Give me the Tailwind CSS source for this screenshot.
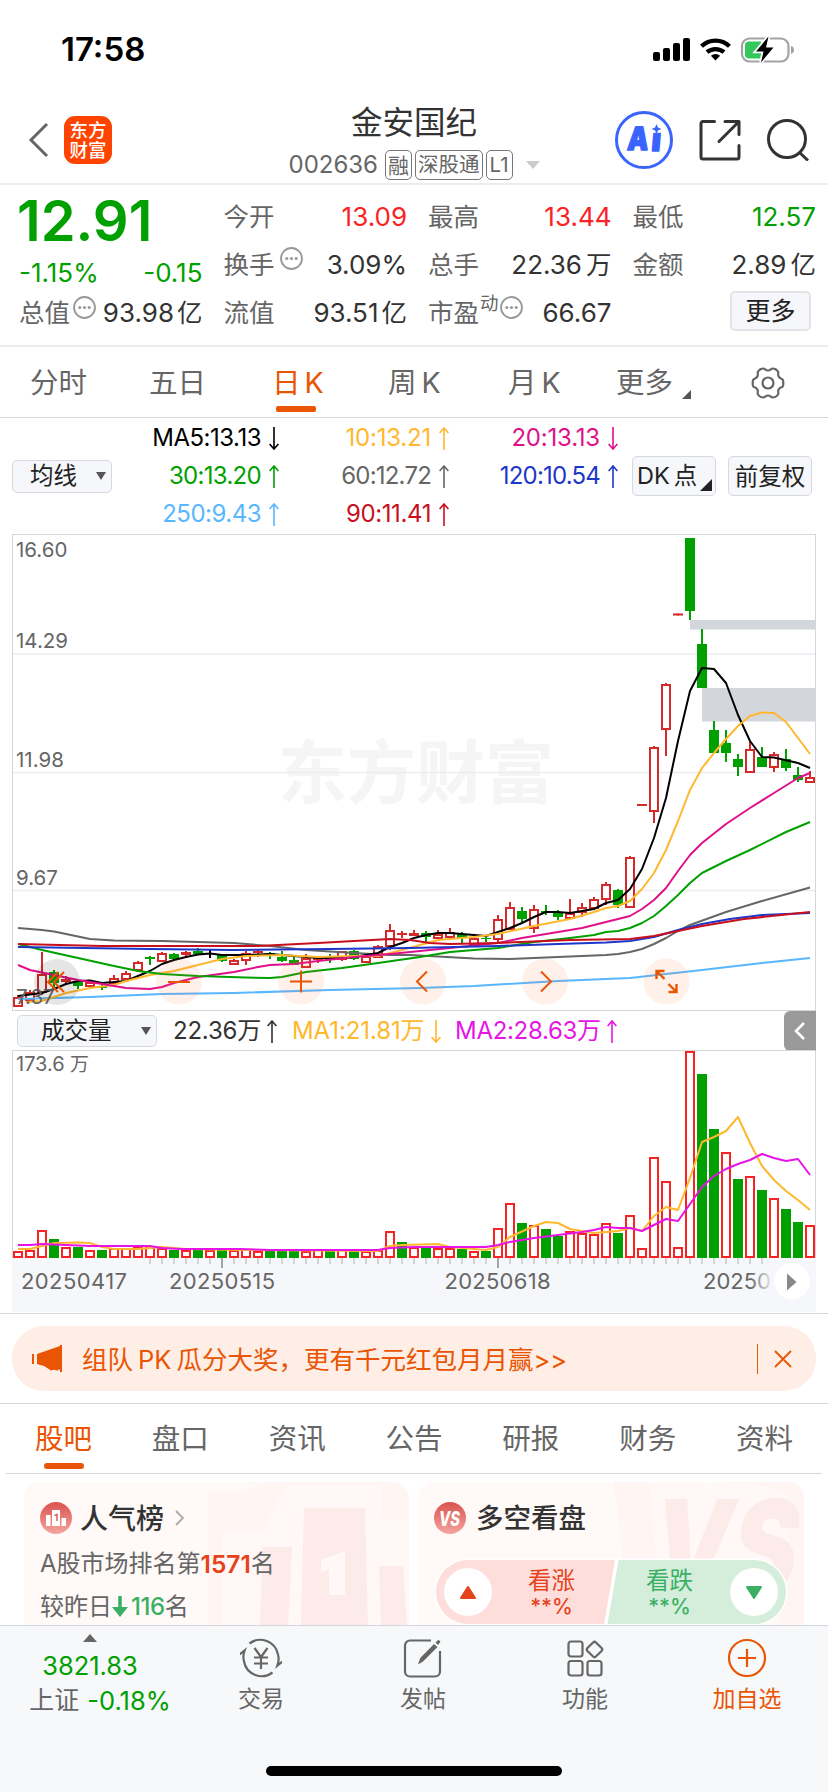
<!DOCTYPE html>
<html lang="zh-CN">
<head>
  <meta charset="UTF-8" />
  <meta name="viewport" content="width=device-width, initial-scale=1.0" />
  <title>金安国纪 002636</title>
  <script src="https://cdn.jsdelivr.net/npm/@tailwindcss/browser@4"></script>
</head>
<body class="w-[828px] h-[1792px] overflow-hidden bg-white text-[#333] font-[Inter,'Noto_Sans_CJK_SC',sans-serif]">
  <div class="flex flex-col h-full">

    <!-- Status bar -->
    <div class="h-[90px] shrink-0 flex items-center justify-between pl-[61px] pr-[34px] pt-[9px]">
      <span class="text-[33px] font-semibold text-black leading-none">17:58</span>
      <svg class="w-[142px] h-[30px]" viewBox="652 35 142 30">
        <g fill="#000">
          <rect x="653" y="52" width="7" height="9" rx="2" />
          <rect x="663" y="48" width="7" height="13" rx="2" />
          <rect x="673" y="43" width="7" height="18" rx="2" />
          <rect x="683" y="38" width="7" height="23" rx="2" />
          <path d="M715.500 60.500l-4.600-4.800a7 7 0 0 1 9.200 0z" />
        </g>
        <g fill="none" stroke="#000" stroke-width="4.200">
          <path d="M701.500 46.300a20 20 0 0 1 28 0" />
          <path d="M707 52.200a13 13 0 0 1 17 0" />
        </g>
        <rect x="742" y="38.500" width="46.500" height="23" rx="7.500" fill="none" stroke="#a3a3a3" stroke-width="2.200" />
        <path d="M791 46v8c2-.6 3-2.200 3-4s-1-3.400-3-4z" fill="#a3a3a3" />
        <path d="M749 41.500h12v17h-12a4 4 0 0 1-4-4v-9a4 4 0 0 1 4-4z" fill="#34c759" />
        <path d="M768.500 36.500L756 51.500h7.500l-2.500 11 12.500-15H766z" fill="#000" stroke="#fff" stroke-width="3.500" paint-order="stroke" />
      </svg>
    </div>

    <!-- Title bar -->
    <header class="h-[95px] shrink-0 flex items-center border-b-2 border-[#ececec] relative pl-[28px] pr-[19px] pt-[6px]">
      <svg class="w-[22px] h-[36px]" viewBox="0 0 22 36"><path d="M19 2L3 18l16 16" fill="none" stroke="#666" stroke-width="3" /></svg>
      <div class="ml-[14px] size-[48px] rounded-[11px] bg-[#ff4400] text-white text-[18.500px] font-medium leading-[20px] flex flex-col items-center justify-center">
        <span>东方</span><span>财富</span>
      </div>
      <div class="absolute left-0 right-0 top-0 h-full flex flex-col items-center pointer-events-none">
        <h1 class="text-[31.500px] leading-[40px] mt-[13px]">金安国纪</h1>
        <div class="flex items-center gap-[3px] mt-[7px] text-[#666] text-[21px] leading-none">
          <span class="text-[24px] mr-[4px]">002636</span>
          <span class="border-[1.500px] border-[#777] rounded-[5px] h-[30px] px-[2px] flex items-center">融</span>
          <span class="border-[1.500px] border-[#777] rounded-[5px] h-[30px] px-[2px] flex items-center text-[20.500px]">深股通</span>
          <span class="border-[1.500px] border-[#777] rounded-[5px] h-[30px] px-[3px] flex items-center text-[20.500px]">L1</span>
          <svg class="w-[14px] h-[8px] ml-[10px]" viewBox="0 0 14 8"><path d="M0 0h14L7 8z" fill="#ccc" /></svg>
        </div>
      </div>
      <div class="ml-auto flex items-center gap-[26px]">
        <svg class="size-[58px]" viewBox="0 0 58 58">
          <circle cx="29" cy="29" r="27.500" fill="none" stroke="#3964fe" stroke-width="3" />
          <g transform="translate(3.200 0) skewX(-5)" fill="#3964fe" stroke="#3964fe" stroke-width="1.500" stroke-linejoin="round" font-family="Inter, sans-serif" font-weight="900" font-size="32"><text x="12" y="39.500" textLength="21" lengthAdjust="spacingAndGlyphs">A</text><text x="36" y="40.500">ı</text></g>
          <path d="M41.500 13l1.400 3.600 3.600 1.400-3.600 1.400-1.400 3.600-1.400-3.600-3.600-1.400 3.600-1.400z" fill="#3964fe" />
        </svg>
        <svg class="w-[42px] h-[42px]" viewBox="0 0 42 42" fill="none" stroke="#333" stroke-width="3" stroke-linecap="round" stroke-linejoin="round">
          <path d="M15.500 2.500H4a2 2 0 0 0-2 2V38a2 2 0 0 0 2 2h34a2 2 0 0 0 2-2V26.500M26 2.500h14V15.500M39 3.500L20 22.500" />
        </svg>
        <svg class="w-[42px] h-[42px]" viewBox="0 0 42 42" fill="none" stroke="#333" stroke-width="3"><circle cx="20" cy="20" r="18.500" /><path d="M32 33l9 8.500" /></svg>
      </div>
    </header>

    <!-- Quote summary -->
    <section class="h-[162px] shrink-0 border-b-2 border-[#ececec] grid grid-cols-4 gap-x-[21px] pl-[19px] pr-[12px] text-[25.500px] leading-none">
      <div class="flex flex-col text-[#00a000]">
        <span class="text-[56px] font-semibold mt-[9px] leading-[54px] -ml-[2px]">12.91</span>
        <div class="flex justify-between items-center mt-[12px] h-[26px]"><span class="text-[26px]">-1.15%</span><span class="text-[26px]">-0.15</span></div>
        <div class="flex justify-between items-center mt-[13px] h-[28px] text-[#333]">
          <span class="text-[#666] flex">总值<svg class="size-[23px] ml-[3px] -mt-[4px]" viewBox="0 0 22 22"><circle cx="11" cy="11" r="10" fill="none" stroke="#999" stroke-width="1.800" /><g fill="#999"><circle cx="6.500" cy="11" r="1.500" /><circle cx="11" cy="11" r="1.500" /><circle cx="15.500" cy="11" r="1.500" /></g></svg></span>
          <span class="flex gap-[3px]"><span class="text-[26px]">93.98</span>亿</span>
        </div>
      </div>
      <div class="flex flex-col pt-[18px] gap-[20px]">
        <div class="flex justify-between items-center h-[28px]"><span class="text-[#666]">今开</span><span class="text-[26px] text-[#fa2323]">13.09</span></div>
        <div class="flex justify-between items-center h-[28px]">
          <span class="text-[#666] flex">换手<svg class="size-[23px] ml-[5px] -mt-[5px]" viewBox="0 0 22 22"><circle cx="11" cy="11" r="10" fill="none" stroke="#999" stroke-width="1.800" /><g fill="#999"><circle cx="6.500" cy="11" r="1.500" /><circle cx="11" cy="11" r="1.500" /><circle cx="15.500" cy="11" r="1.500" /></g></svg></span>
          <span class="text-[26px]">3.09%</span>
        </div>
        <div class="flex justify-between items-center h-[28px]"><span class="text-[#666]">流值</span><span class="flex gap-[3px]"><span class="text-[26px]">93.51</span>亿</span></div>
      </div>
      <div class="flex flex-col pt-[18px] gap-[20px]">
        <div class="flex justify-between items-center h-[28px]"><span class="text-[#666]">最高</span><span class="text-[26px] text-[#fa2323]">13.44</span></div>
        <div class="flex justify-between items-center h-[28px]"><span class="text-[#666]">总手</span><span class="flex gap-[4px]"><span class="text-[26px]">22.36</span>万</span></div>
        <div class="flex justify-between items-center h-[28px]">
          <span class="text-[#666] flex">市盈<span class="text-[18.500px] -mt-[6px] ml-[1px]">动</span><svg class="size-[23px] ml-[1px] -mt-[4px]" viewBox="0 0 22 22"><circle cx="11" cy="11" r="10" fill="none" stroke="#999" stroke-width="1.800" /><g fill="#999"><circle cx="6.500" cy="11" r="1.500" /><circle cx="11" cy="11" r="1.500" /><circle cx="15.500" cy="11" r="1.500" /></g></svg></span>
          <span class="text-[26px]">66.67</span>
        </div>
      </div>
      <div class="flex flex-col pt-[18px] gap-[20px]">
        <div class="flex justify-between items-center h-[28px]"><span class="text-[#666]">最低</span><span class="text-[26px] text-[#00a000]">12.57</span></div>
        <div class="flex justify-between items-center h-[28px]"><span class="text-[#666]">金额</span><span class="flex gap-[4px]"><span class="text-[26px]">2.89</span>亿</span></div>
        <button class="self-end w-[81px] h-[40px] -mt-[8px] mr-[5px] rounded-[5px] border-2 border-[#e2e4e8] bg-[#f6f7fa] text-[#222] text-[25px] pt-[1px]">更多</button>
      </div>
    </section>

    <!-- Period tabs -->
    <nav class="h-[71px] shrink-0 border-b border-[#d3d6db] flex items-center text-[28.500px] leading-none text-[#666] pl-[30px] pt-[2px]">
      <span class="w-[119px]">分时</span>
      <span class="w-[123px]">五日</span>
      <span class="w-[116px] text-[#ea5504] relative">日<span class="ml-[4px]">K</span><i class="absolute left-[4px] top-[37px] w-[40px] h-[6px] rounded-[2px] bg-[#ea5504]"></i></span>
      <span class="w-[120px]">周<span class="ml-[5px]">K</span></span>
      <span class="w-[108px]">月<span class="ml-[5px]">K</span></span>
      <span class="flex items-end">更多<svg class="size-[9px] ml-[9px] -mb-[2px]" viewBox="0 0 9 9"><path d="M9 0v9H0z" fill="#555" /></svg></span>
      <svg class="size-[34px] ml-[60px] -mt-[1px]" viewBox="0 0 34 34" fill="none" stroke="#666" stroke-width="2.200" stroke-linejoin="round">
        <path d="M12.500 2.500c1.500 0 2 2 4.500 2s3-2 4.500-2c1.800 0 4.500 1.500 5.500 3 1 1.600-.6 2.700.6 5s4 2 4.400 3.500c.4 2 .4 4 0 6-.4 1.500-3.200 1.200-4.400 3.500s.4 3.400-.6 5c-1 1.500-3.700 3-5.500 3-1.500 0-2-2-4.500-2s-3 2-4.500 2c-1.800 0-4.500-1.500-5.500-3-1-1.600.6-2.700-.6-5S2.400 21.500 2 20c-.4-2-.4-4 0-6 .4-1.500 3.200-1.200 4.400-3.500S6 7.100 7 5.500c1-1.500 3.700-3 5.500-3z" />
        <circle cx="17" cy="17" r="5.500" />
      </svg>
    </nav>

    <!-- Moving averages -->
    <section class="h-[116px] shrink-0 flex items-center pl-[12px] text-[24px] leading-none">
      <button class="w-[100px] h-[33px] rounded-[5px] border-[1.500px] border-[#d6d9de] bg-[#f6f7fa] text-[#222] text-[23.500px] flex items-center pl-[17px]">均线<svg class="w-[10px] h-[8px] ml-auto mr-[5px]" viewBox="0 0 10 8"><path d="M0 0h10L5 8z" fill="#555" /></svg></button>
      <div class="grid grid-cols-[167px_170px_169px] w-[506px] gap-y-[13px] justify-items-end tracking-[-0.2px]">
        <span class="flex items-center gap-[8px] h-[25px] text-black tracking-[-0.5px]">MA5:13.13<svg class="w-[10px] h-[23px]" viewBox="0 0 10 23" fill="none" stroke="currentColor" stroke-width="1.600"><path d="M5 0v22M.6 17L5 22l4.400-5" /></svg></span>
        <span class="flex items-center gap-[8px] h-[25px] text-[#ffb82e]">10:13.21<svg class="w-[10px] h-[23px]" viewBox="0 0 10 23" fill="none" stroke="currentColor" stroke-width="1.600"><path d="M5 23V1M.6 6L5 1l4.400 5" /></svg></span>
        <span class="flex items-center gap-[8px] h-[25px] text-[#e0108a]">20:13.13<svg class="w-[10px] h-[23px]" viewBox="0 0 10 23" fill="none" stroke="currentColor" stroke-width="1.600"><path d="M5 0v22M.6 17L5 22l4.400-5" /></svg></span>
        <span class="flex items-center gap-[8px] h-[25px] text-[#00a000] tracking-[-0.7px]">30:13.20<svg class="w-[10px] h-[23px]" viewBox="0 0 10 23" fill="none" stroke="currentColor" stroke-width="1.600"><path d="M5 23V1M.6 6L5 1l4.400 5" /></svg></span>
        <span class="flex items-center gap-[8px] h-[25px] text-[#666] tracking-[-0.8px]">60:12.72<svg class="w-[10px] h-[23px]" viewBox="0 0 10 23" fill="none" stroke="currentColor" stroke-width="1.600"><path d="M5 23V1M.6 6L5 1l4.400 5" /></svg></span>
        <span class="flex items-center gap-[8px] h-[25px] text-[#1e37c8] tracking-[-0.8px]">120:10.54<svg class="w-[10px] h-[23px]" viewBox="0 0 10 23" fill="none" stroke="currentColor" stroke-width="1.600"><path d="M5 23V1M.6 6L5 1l4.400 5" /></svg></span>
        <span class="flex items-center gap-[8px] h-[25px] text-[#58b7ff] tracking-[-0.5px]">250:9.43<svg class="w-[10px] h-[23px]" viewBox="0 0 10 23" fill="none" stroke="currentColor" stroke-width="1.600"><path d="M5 23V1M.6 6L5 1l4.400 5" /></svg></span>
        <span class="flex items-center gap-[8px] h-[25px] text-[#c80f1e] tracking-[-0.4px]">90:11.41<svg class="w-[10px] h-[23px]" viewBox="0 0 10 23" fill="none" stroke="currentColor" stroke-width="1.600"><path d="M5 23V1M.6 6L5 1l4.400 5" /></svg></span>
      </div>
      <button class="ml-[14px] w-[84px] h-[40px] rounded-[5px] border-[1.500px] border-[#d6d9de] bg-[#f6f7fa] text-[#222] text-[23.500px] flex items-center pl-[4px]">DK<span class="ml-[4px]">点</span><svg class="size-[12px] self-end mb-[4px] ml-[3px] shrink-0" viewBox="0 0 12 12"><path d="M12 0v12H0z" fill="#222" /></svg></button>
      <button class="ml-[12px] w-[84px] h-[40px] rounded-[5px] border-[1.500px] border-[#d6d9de] bg-[#f6f7fa] text-[#222] text-[23.500px] pt-[1px]">前复权</button>
    </section>

    <!-- Candlestick chart -->
    <svg id="kline" class="w-[828px] h-[478px] shrink-0" viewBox="0 534 828 478">
      <g font-family="'Noto Sans CJK SC', sans-serif" font-weight="700" fill="#f5f5f6"><text x="278" y="798" font-size="69">东方财富</text></g>
      <g fill="none" stroke="#ebedf4" stroke-width="1.500"><path d="M13 654h803M13 772.500h803M13 890.500h803" /></g>
      <rect x="12.500" y="534.500" width="803" height="476" fill="none" stroke="#d3d6db" />
      <g fill="#d3d6db"><rect x="690" y="620" width="126" height="9.500" /><rect x="702" y="688" width="114" height="33.500" /></g>
      <g id="candles"></g>
      <g id="averages" fill="none" stroke-width="2" stroke-linejoin="round"></g>
      <g font-family="Inter, sans-serif" font-size="20.500" fill="#666">
        <text x="16" y="557">16.60</text><text x="16" y="648">14.29</text><text x="16" y="766.500">11.98</text><text x="16" y="885">9.67</text><text x="16" y="1004">7.37</text>
      </g>
      <circle cx="57" cy="982" r="23" fill="#000" fill-opacity=".1" />
      <g fill="#ff7a3c" fill-opacity=".11"><circle cx="179" cy="981.500" r="23" /><circle cx="301" cy="981.500" r="23" /><circle cx="423" cy="981.500" r="23" /><circle cx="545" cy="981.500" r="23" /><circle cx="666.500" cy="981.500" r="23" /></g>
      <g fill="none" stroke="#ea5504" stroke-width="2">
        <path d="M58 972l-10 10 10 10M64 972l-10 10 10 10M168 982h22M290 981.500h22M301 970.500v22" />
        <path d="M427 971.500l-10 10 10 10M541 971.500l10 10-10 10" />
        <path d="M656.500 979v-8h8M656.500 971l8 8M668.500 992h8v-8M676.500 992l-8-8" stroke-width="2.400" />
      </g>
    </svg>

    <!-- Volume header -->
    <div class="h-[38px] shrink-0 flex items-center pl-[17px] pr-[12px] text-[24px] leading-none">
      <button class="w-[140px] h-[32px] rounded-[5px] border-[1.500px] border-[#d6d9de] bg-[#f6f7fa] text-[#222] flex items-center pl-[23px] text-[23.500px]">成交量<svg class="w-[10px] h-[8px] ml-auto mr-[5px]" viewBox="0 0 10 8"><path d="M0 0h10L5 8z" fill="#555" /></svg></button>
      <span class="flex items-center gap-[6px] ml-[16px] w-[119px] tracking-[-0.2px]">22.36万<svg class="w-[10px] h-[23px]" viewBox="0 0 10 23" fill="none" stroke="currentColor" stroke-width="1.600"><path d="M5 23V1M.6 6L5 1l4.400 5" /></svg></span>
      <span class="flex items-center gap-[6px] w-[163px] text-[#ffb82e] tracking-[-0.1px]">MA1:21.81万<svg class="w-[10px] h-[23px]" viewBox="0 0 10 23" fill="none" stroke="currentColor" stroke-width="1.600"><path d="M5 0v22M.6 17L5 22l4.400-5" /></svg></span>
      <span class="flex items-center gap-[6px] text-[#e614e6] tracking-[-0.3px]">MA2:28.63万<svg class="w-[10px] h-[23px]" viewBox="0 0 10 23" fill="none" stroke="currentColor" stroke-width="1.600"><path d="M5 23V1M.6 6L5 1l4.400 5" /></svg></span>
      <div class="ml-auto w-[32px] h-[40px] rounded-l-[6px] bg-[#999] flex items-center justify-center"><svg class="w-[12px] h-[20px]" viewBox="0 0 12 20"><path d="M10 2L2 10l8 8" fill="none" stroke="#fff" stroke-width="2.600" /></svg></div>
    </div>

    <!-- Volume chart with date axis -->
    <svg id="volume" class="w-[828px] h-[264px] shrink-0" viewBox="0 1050 828 264">
      <defs><linearGradient id="fade"><stop offset="0" stop-color="#f6f7fa" stop-opacity="0" /><stop offset="1" stop-color="#f6f7fa" /></linearGradient></defs>
      <rect x="12" y="1258" width="804" height="54" fill="#f6f7fa" />
      <path d="M12.500 1258V1050.500h803V1258" fill="none" stroke="#d3d6db" />
      <g id="bars"></g>
      <g id="volumeAverages" fill="none" stroke-width="2" stroke-linejoin="round"></g>
      <g id="ticks" stroke="#c8c8c8" stroke-width="1.500"></g>
      <g font-family="Inter, 'Noto Sans CJK SC', sans-serif" fill="#666">
        <text x="16" y="1071" font-size="20">173.6</text><text x="70" y="1071" font-size="19">万</text>
        <g font-size="22"><text x="21" y="1288.500" textLength="106">20250417</text><text x="169" y="1288.500" textLength="106">20250515</text><text x="444.500" y="1288.500" textLength="106">20250618</text><text x="703" y="1288.500">20250</text></g>
      </g>
      <rect x="750" y="1268" width="24" height="30" fill="url(#fade)" />
      <circle cx="792" cy="1281.500" r="18" fill="#fff" />
      <path d="M787 1273.500v17l9.500-8.500z" fill="#888" />
      <path d="M0 1313.500h828" stroke="#d3d6db" />
    </svg>

    <!-- Promo banner -->
    <div class="h-[90px] shrink-0 border-b border-[#d3d6db] px-[12px] pt-[12px]">
      <div class="h-[65px] rounded-[32px] bg-[#feeee6] text-[#ea5504] flex items-center pl-[20px] pr-[24px] text-[25.500px] leading-none">
        <svg class="w-[31px] h-[28px]" viewBox="0 0 31 28"><path d="M0 9h2v10H0zM5 9L28 1V0h2v27h-2v-2l-2-.8v1.600l-4-1-3 .8-7-4.600L5 19z" fill="#ea5504" /></svg>
        <span class="ml-[19px] mt-[2px]">组队<span class="mx-[5px]">PK</span>瓜分大奖，更有千元红包月月赢&gt;&gt;</span>
        <i class="ml-auto w-[1.500px] h-[30px] bg-[#ea5504]"></i>
        <svg class="size-[18px] ml-[16px]" viewBox="0 0 18 18"><path d="M1 1l16 16M17 1L1 17" stroke="#ea5504" stroke-width="1.800" /></svg>
      </div>
    </div>

    <!-- Content tabs -->
    <nav class="h-[70px] shrink-0 mx-[6px] border-b border-[#d3d6db] flex items-center justify-between px-[29px] pt-[2px] text-[28.500px] leading-none text-[#666]">
      <span class="text-[#ea5504] relative">股吧<i class="absolute left-[9px] top-[38px] w-[40px] h-[6px] rounded-[3px] bg-[#ea5504]"></i></span>
      <span>盘口</span><span>资讯</span><span>公告</span><span>研报</span><span>财务</span><span>资料</span>
    </nav>

    <!-- Cards, cut off by the bottom bar -->
    <div class="h-[151px] shrink-0 overflow-hidden flex gap-[9px] px-[24px] pt-[8px]">
      <div class="w-[385px] h-[180px] rounded-t-[16px] bg-[#fff9f7] relative overflow-hidden">
        <svg class="absolute inset-0 w-[385px] h-[143px]" viewBox="24 1482 385 143">
          <path d="M208 1491h36l22-9h143v143H208z" fill="#fff5f3" />
          <path d="M222 1531h40l24-46h96v34h27v106H222z" fill="#fff8f6" />
          <g fill="#fcebe9"><path d="M263 1547h29l-4 78h-28zM304 1508h61l3 117h-67zM379 1566h24l4 59h-26z" /></g>
          <path d="M321 1560l24-9v44h-16v-26l-8 3z" fill="#fff8f6" />
        </svg>
        <div class="relative pl-[16px] leading-none">
          <div class="flex items-center h-[32px] mt-[20px]">
            <svg class="size-[32px]" viewBox="0 0 32 32">
              <defs><linearGradient id="badge" x2="0" y2="1"><stop stop-color="#d9534f" /><stop offset="1" stop-color="#f5a5a0" /></linearGradient></defs>
              <circle cx="16" cy="16" r="16" fill="url(#badge)" />
              <path d="M6 13h4.500v11H6zM12 8h8v16h-8zM21.500 16H26v8h-4.500z" fill="#fff" /><path d="M14.500 13.500l2.500-1v6.500" fill="none" stroke="#dd6560" stroke-width="1.600" />
            </svg>
            <span class="text-[28px] font-medium ml-[8px] mt-[2px] text-[#333]">人气榜</span>
            <svg class="w-[9px] h-[16px] ml-[11px]" viewBox="0 0 9 16"><path d="M1 1l7 7-7 7" fill="none" stroke="#aaa" stroke-width="1.800" /></svg>
          </div>
          <p class="text-[24px] h-[28px] mt-[16px] text-[#666] flex items-center whitespace-nowrap">A股市场排名第<b class="font-semibold text-[#e4431b] text-[24.500px]">1571</b>名</p>
          <p class="text-[24px] h-[28px] mt-[15px] text-[#666] flex items-center whitespace-nowrap">较昨日<svg class="w-[16px] h-[22px]" viewBox="0 0 16 22"><path d="M6.200 0h3.600v11H16l-8 10-8-10h6.200z" fill="#3bb065" /></svg><b class="font-medium text-[#3bb065] ml-[3px] tracking-[-0.4px]">116</b>名</p>
        </div>
      </div>
      <div class="w-[386px] h-[180px] rounded-t-[16px] bg-[#fff9f7] relative overflow-hidden">
        <svg class="absolute inset-0 w-[386px] h-[143px]" viewBox="418 1482 386 143">
          <path d="M614 1482h80l14 10 16-10h80v143h-22l-40-60-118 0z" fill="#fff5f3" />
          <path d="M649 1482h46l13 10 16-10c40 0 60 8 70 20l-8 60H656z" fill="#fff8f6" />
          <g transform="translate(277 0) skewX(-10)" font-family="Inter, sans-serif" font-weight="900" fill="#fcebe9"><text x="650" y="1592" font-size="128" textLength="145" lengthAdjust="spacingAndGlyphs">VS</text></g>
        </svg>
        <div class="relative leading-none">
          <div class="flex items-center h-[32px] mt-[20px] pl-[16px]">
            <svg class="size-[32px]" viewBox="0 0 32 32"><circle cx="16" cy="16" r="16" fill="url(#badge)" /><text x="15.500" y="23.500" text-anchor="middle" font-family="Inter, sans-serif" font-style="italic" font-weight="800" font-size="20" textLength="21" lengthAdjust="spacingAndGlyphs" fill="#fff">VS</text></svg>
            <span class="text-[27.500px] font-medium ml-[10px] mt-[2px] text-[#333]">多空看盘</span>
          </div>
          <div class="relative ml-[18px] mt-[26px] w-[350px] h-[64px]">
            <svg class="absolute inset-0 w-[350px] h-[64px] overflow-visible" viewBox="0 0 350 64"><path d="M32 0h286a32 32 0 0 1 0 64H32a32 32 0 0 1 0-64z" fill="#fff" stroke="#fff" stroke-width="3" /><path d="M32 0h147l-11 64H32a32 32 0 0 1 0-64z" fill="#fddedb" /><path d="M182.500 0H318a32 32 0 0 1 0 64H171.500z" fill="#d4eedb" /></svg>
            <div class="relative h-full grid grid-cols-[48px_1fr_1fr_48px] items-center px-[8px] text-[23.500px]">
              <span class="size-[48px] rounded-full bg-white flex items-center justify-center"><svg class="w-[16px] h-[13px]" viewBox="0 0 16 13"><path d="M8 1l7 11H1z" fill="#e4431b" stroke="#e4431b" stroke-width="2" stroke-linejoin="round" /></svg></span>
              <span class="flex flex-col items-center gap-[4px] pt-[2px] text-[#e4431b]"><span>看涨</span><span class="text-[21px] font-medium">**%</span></span>
              <span class="flex flex-col items-center gap-[4px] pt-[2px] text-[#3bb065] pr-[2px]"><span>看跌</span><span class="text-[21px] font-medium">**%</span></span>
              <span class="size-[48px] rounded-full bg-white flex items-center justify-center"><svg class="w-[16px] h-[13px]" viewBox="0 0 16 13"><path d="M8 12L1 1h14z" fill="#3bb065" stroke="#3bb065" stroke-width="2" stroke-linejoin="round" /></svg></span>
            </div>
          </div>
        </div>
      </div>
    </div>

    <!-- Bottom bar -->
    <footer class="grow border-t border-[#d3d6db] bg-[#f6f8fa] flex flex-col">
      <div class="flex h-[90px] text-[23px] leading-none text-[#666]">
        <div class="w-[180px] flex flex-col items-center pt-[8px] text-[25px]">
          <svg class="w-[14px] h-[8px]" viewBox="0 0 14 8"><path d="M7 0l7 8H0z" fill="#666" /></svg>
          <span class="text-[#00a000] mt-[11px] text-[25.500px]">3821.83</span>
          <span class="mt-[9px] ml-[20px] flex items-center gap-[8px]">上证<span class="text-[#00a000] text-[25.500px]">-0.18%</span></span>
        </div>
        <div class="w-[162px] flex flex-col items-center pt-[11px]">
          <svg class="size-[42px]" viewBox="0 0 42 42" fill="none" stroke="#666" stroke-width="2.200"><path d="M9.500 6.500A18 18 0 0 1 38 17.500a18 18 0 0 1-.6 11l5-4M32.500 35.500A18 18 0 0 1 4 24.500a18 18 0 0 1 .6-11l-5 4M14.500 11l6.500 9 6.500-9M14 20.500h14M14 26.500h14M21 20v12" /></svg>
          <span class="mt-[9px]">交易</span>
        </div>
        <div class="w-[162px] flex flex-col items-center pt-[11px]">
          <svg class="size-[42px]" viewBox="0 0 42 42" fill="none" stroke="#666" stroke-width="2.200"><path d="M29 3.500H8a5 5 0 0 0-5 5v26a5 5 0 0 0 5 5h25a5 5 0 0 0 5-5V14" /><path d="M16 27.500l2.200-6.500L32 7l3.500 3L21 24.500zM33.500 5.500l3-2.800 2 2-2.500 3.300z" fill="#666" stroke="none" /></svg>
          <span class="mt-[9px]">发帖</span>
        </div>
        <div class="w-[162px] flex flex-col items-center pt-[11px]">
          <svg class="size-[42px]" viewBox="0 0 42 42" fill="none" stroke="#666" stroke-width="2.200"><rect x="4.500" y="4.500" width="14" height="15" rx="2.500" /><rect x="4.500" y="24" width="14" height="14.500" rx="2.500" /><rect x="23.500" y="24" width="14" height="14.500" rx="2.500" /><rect x="24.500" y="6.500" width="12" height="12" rx="2" transform="rotate(45 30.500 12.500)" /></svg>
          <span class="mt-[9px]">功能</span>
        </div>
        <div class="w-[162px] flex flex-col items-center pt-[11px] text-[#ea5504]">
          <svg class="size-[42px]" viewBox="0 0 42 42" fill="none" stroke="#ea5504" stroke-width="2.200"><circle cx="21" cy="21" r="18" /><path d="M12 21h18M21 12v18" /></svg>
          <span class="mt-[9px]">加自选</span>
        </div>
      </div>
      <div class="mt-auto mb-[16px] mx-auto w-[296px] h-[10px] rounded-full bg-black"></div>
    </footer>
  </div>

  <script>
    const NS = 'http://www.w3.org/2000/svg';
    const RED = '#d42a2a', GREEN = '#00a000';

    // [direction, body top, body bottom, wick top, wick bottom]
    const candles = [
      ['r',997,1006,995,1007],['r',992,1000,990,1001],['r',974,992,952,995],['g',972,983,970,987],['r',979,982,976,985],
      ['g',981,986,981,989],['r',982,986,981,987],['g',986,988,983,990],['r',978,983,975,983],['r',973,979,971,979],
      ['r',962,970,961,970],['g',957,959,956,965],['r',953,961,952,962],['g',954,959,953,960],['r',952,955,951,957],
      ['g',951,954,948,955],['k',953,954,949,958],['g',955,961,955,962],['r',960,964,959,964],['r',953,960,951,965],
      ['r',951,953,950,957],['g',953,954,952,959],['g',957,961,951,962],['g',960,965,957,965],['r',958,967,954,967],
      ['r',958,960,956,963],['g',958,960,954,963],['r',951,959,951,961],['g',951,959,950,960],['r',956,962,955,963],
      ['r',946,957,945,957],['r',930,946,924,950],['r',933,935,931,938],['r',933,936,930,936],['g',933,937,931,943],
      ['r',934,938,930,938],['r',932,937,928,939],['g',934,938,932,943],['r',938,945,937,945],['g',938,939,936,942],
      ['r',919,939,915,943],['r',907,929,902,929],['g',911,919,907,923],['r',909,928,905,933],['g',911,913,905,915],
      ['g',912,917,910,920],['r',913,918,899,919],['r',907,912,903,917],['r',899,908,897,908],['r',884,899,882,905],
      ['g',890,905,889,908],['r',857,907,856,907],['r',804,806,804,806],['r',747,811,746,823],['r',684,729,683,756],
      ['r',613.5,615.5,613.5,615.5],['g',538,611,538,620],['g',644,688,629,688],['g',730,753,721,753],['g',743,753,730,762],
      ['g',759,767,754,776],['r',749,772,741,772],['g',757,767,747,767],['r',754,767,752,772],['g',759,768,749,771],
      ['g',775,780,767,782],['r',777,782,771,783]
    ];

    const volumeTops = [1251,1250,1230,1239,1247,1247,1250,1250,1248,1248,1247,1247,1248,1250,1250,1250,1250,1250,1250,1249,
      1251,1251,1251,1250,1251,1249,1251,1249,1250,1251,1250,1231,1242,1247,1247,1248,1248,1249,1251,1251,
      1228,1203,1223,1225,1229,1236,1231,1233,1234,1223,1233,1215,1248,1157,1181,1247,1051,1074,1129,1152,
      1179,1176,1190,1198,1209,1222,1225];
    const volumeColors = 'rrrgrgrgrrrrrgrgrgrrrggg' + 'rrgrgrrrgrgrrgrgrrgrggrrrrgrrrrrrggrgrgrggr';

    const averages = [
      ['#58b7ff', '18,999 90,997 162,994 234,993 330,990 420,988 474,986 558,981 630,978 666,974 702,970 762,963 810,958'],
      ['#666666', '18,928 42,930 54,931.5 66,934 90,939 114,940.5 162,941 234,943 270,946 306,950 354,953 390,955 410,955 474,958.5 510,959 558,957 606,955 618,954 630,952 642,949 654,944 666,938 678,931 690,925 726,912 762,901 810,887.5'],
      ['#000000', '18,996 42,993 54,989 66,984 78,981 90,980.5 102,983 126,981 138,976 150,971 162,964 174,960 186,957 198,954.5 210,953.5 222,955 246,955 270,954 294,956 318,958 342,958 354,957 366,955 378,953 390,947 402,943 414,938 426,935 438,933 450,933 486,936 498,932 510,928 522,923 534,917 546,912 558,912 570,913 594,909 606,903 618,900 630,889 642,869 654,838 666,798 678,741 690,691 702,668 714,669 726,683 738,715 750,741 762,757 774,757.5 798,763 810,768'],
      ['#ffb82e', '26,1002 42,1001 54,997 66,993 90,988 114,985 126,981 150,975 174,971 198,965 222,959 246,956 282,955 318,957 354,956 378,956 402,950 438,940 474,937 498,934 534,926 570,919 594,912 606,908 618,906 630,901 642,889 654,873 666,850 678,821 690,790 702,768 714,753 726,739 738,726 750,716 762,712.5 774,713 786,722 798,738 810,754'],
      ['#e0108a', '18,965 30,970 54,975 78,980 102,984 126,988 150,989 162,987 174,983 198,977 234,972 258,967 270,965 294,964 318,961 354,957 390,954 420,951 450,948 498,943 522,938 558,932 582,928 606,922 618,919 630,916 642,909 654,900 666,888 678,871 690,855 702,843 726,824 750,808 774,793 798,778 810,773'],
      ['#00a000', '18,944 42,950 78,958 114,966 138,971 162,974 198,976 246,977.5 270,978 282,977 306,972 342,968 378,963 420,957 450,952 498,948 534,942 570,938 594,935 606,932 618,931 630,928 642,923 654,916 666,906 678,895 690,883 702,873 726,861 750,850 786,832 810,822'],
      ['#1e37c8', '18,947 150,949 234,950 330,949 410,948 498,946 558,944 606,942.5 630,941 654,937 678,930 702,924 730,919 762,915 810,913'],
      ['#c80f1e', '18,944 102,946 258,946 318,943 390,939 410,940 430,943 450,944 498,943 570,940 630,939 654,936 678,931 702,926 744,919 810,912']
    ];

    const volumeAverages = [
      ['#ffb82e', '18,1249 30,1249 42,1246 54,1243 78,1242.5 90,1243 102,1247 114,1249 138,1249 162,1247 186,1249 246,1250 378,1251 390,1246 402,1245 438,1244 450,1247 486,1250 498,1247 510,1237 534,1226 546,1222 558,1223 570,1229 594,1233 618,1231 630,1228 642,1231 654,1216 666,1207 678,1210 690,1178 702,1142 714,1137 726,1131 738,1117 750,1143 762,1166 774,1180 786,1191 798,1200 810,1210'],
      ['#e614e6', '18,1245 30,1245 42,1244 90,1246 150,1246 162,1248 180,1249 240,1249 270,1250 378,1250 390,1248 414,1247 486,1247 498,1245 510,1242 534,1238 558,1235 582,1232 594,1230 606,1227 618,1228 630,1228 642,1231 654,1225 666,1219 678,1221 690,1204 702,1187 714,1176 726,1169 738,1164 750,1160 762,1154 774,1158 786,1161 798,1159 810,1175']
    ];

    function add(parent, tag, attrs) {
      const el = document.createElementNS(NS, tag);
      for (const key in attrs) el.setAttribute(key, attrs[key]);
      document.getElementById(parent).appendChild(el);
    }

    candles.forEach(([dir, top, bottom, high, low], i) => {
      const x = 18 + i * 12;
      const color = dir === 'r' ? RED : dir === 'g' ? GREEN : '#000';
      const hollow = dir === 'r' && bottom - top > 3;
      add('candles', 'path', { d: `M${x} ${high}V${low}`, stroke: color, 'stroke-width': 2 });
      if (hollow) {
        add('candles', 'rect', { x: x - 4, y: top + 1, width: 8, height: bottom - top - 1, fill: '#fff', stroke: color, 'stroke-width': 2 });
      } else {
        add('candles', 'rect', { x: x - 5, y: top, width: 10, height: bottom - top, fill: color });
      }
    });
    averages.forEach(([stroke, points]) => add('averages', 'polyline', { points, stroke }));

    volumeTops.forEach((top, i) => {
      const x = 18 + i * 12;
      if (volumeColors[i] === 'g') {
        add('bars', 'rect', { x: x - 5, y: top, width: 10, height: 1258 - top, fill: GREEN });
      } else {
        add('bars', 'rect', { x: x - 4, y: top + 1, width: 8, height: 1256 - top, fill: '#fff', stroke: '#fa2323', 'stroke-width': 2 });
      }
    });
    volumeAverages.forEach(([stroke, points]) => add('volumeAverages', 'polyline', { points, stroke }));

    for (let x = 150; x <= 762; x += 12) {
      const major = x === 222 || x === 498;
      add('ticks', 'path', { d: `M${x} 1258V${major ? 1268 : 1264}`, stroke: major ? '#888' : '#c8c8c8' });
    }
  </script>
</body>
</html>
